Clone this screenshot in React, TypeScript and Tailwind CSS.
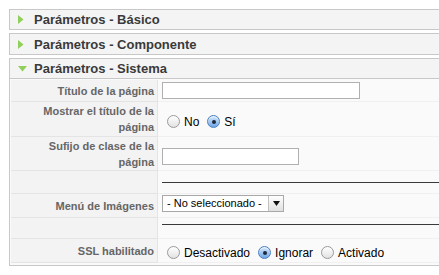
import React from "react"

const sans = "font-['Liberation_Sans','Helvetica','Arial',sans-serif]"

function Arrow({ open }: { open?: boolean }) {
  return open ? (
    <svg width="9" height="6" viewBox="0 0 9 6" className="shrink-0">
      <polygon points="0,0 9,0 4.5,5.5" fill="#8fcf5a" />
    </svg>
  ) : (
    <svg width="6" height="9" viewBox="0 0 6 9" className="shrink-0">
      <polygon points="0,0 5.5,4.5 0,9" fill="#8fcf5a" />
    </svg>
  )
}

function PanelHeader({ title, open, h }: { title: string; open?: boolean; h: string }) {
  return (
    <div className={`flex items-center bg-[#f4f4f4] ${h} pl-[8px]`}>
      <div className="w-[16px] flex items-center">
        <Arrow open={open} />
      </div>
      <span className="text-[13px] font-bold text-[#3a3a3a] leading-none">{title}</span>
    </div>
  )
}

function Radio({ checked }: { checked?: boolean }) {
  return checked ? (
    <span className="w-[13px] h-[13px] rounded-full border border-[#4a7fc0] bg-gradient-to-b from-[#d6e8fb] to-[#6fa6e6] flex items-center justify-center shrink-0 shadow-[inset_0_1px_1px_rgba(255,255,255,0.7)]">
      <span className="w-[4px] h-[4px] rounded-full bg-[#1b2a3a]" />
    </span>
  ) : (
    <span className="w-[13px] h-[13px] rounded-full border border-[#9a9a9a] bg-gradient-to-b from-[#ffffff] to-[#e2e2e2] shrink-0" />
  )
}

function Row({ label, h, children }: { label?: React.ReactNode; h: string; children?: React.ReactNode }) {
  return (
    <div className={`flex ${h}`}>
      <div className="w-[147px] shrink-0 bg-[#f3f3f3] border-b border-r border-[#e4e4e4] flex items-center justify-end pr-[3px] text-right text-[11px] font-bold text-[#666] leading-[16px]">
        {label}
      </div>
      <div className="flex-1 border-b border-[#f0f0f0] flex items-center pl-[4px]">{children}</div>
    </div>
  )
}

function RadioOpt({ label, checked }: { label: string; checked?: boolean }) {
  return (
    <label className="flex items-center gap-[4px] mr-[8px]">
      <Radio checked={checked} />
      <span className="text-[12px] text-black">{label}</span>
    </label>
  )
}

export default function App() {
  return (
    <div className={`w-[439px] h-[275px] overflow-hidden bg-white pl-[9px] pt-[9px] ${sans}`}>
      <div className="w-[460px] flex flex-col gap-[3px]">
        <div className="border border-[#c8c8c8]">
          <PanelHeader title="Parámetros - Básico" h="h-[19px]" />
        </div>
        <div className="border border-[#c8c8c8]">
          <PanelHeader title="Parámetros - Componente" h="h-[20px]" />
        </div>
        <div className="border border-[#c8c8c8]">
          <div className="border-b border-[#c8c8c8]">
            <PanelHeader title="Parámetros - Sistema" open h="h-[19px]" />
          </div>
          <div className="bg-[#fafafa] pl-[1px] pt-[1px] pb-[2px]">
            <Row label="Título de la página" h="h-[22px]">
              <input
                type="text"
                className="w-[198px] h-[17px] border border-[#b0b0b0] bg-white outline-none"
              />
            </Row>
            <Row
              h="h-[35px]"
              label={
                <span>
                  Mostrar el título de la
                  <br />
                  página
                </span>
              }
            >
              <div className="flex items-center pl-[5px] pt-[5px]">
                <RadioOpt label="No" />
                <RadioOpt label="Sí" checked />
              </div>
            </Row>
            <Row
              h="h-[34px]"
              label={
                <span>
                  Sufijo de clase de la
                  <br />
                  página
                </span>
              }
            >
              <input
                type="text"
                className="w-[137px] h-[17px] border border-[#b0b0b0] bg-white outline-none mt-[5px]"
              />
            </Row>
            <Row h="h-[23px]">
              <div className="w-full h-[1px] bg-[#3a3a3a] mt-[1px]" />
            </Row>
            <Row label="Menú de Imágenes" h="h-[24px]">
              <div className="w-[122px] h-[17px] border border-[#a8a8a8] bg-white flex items-center -mt-[4px]">
                <span className="flex-1 pl-[4px] text-[11px] text-black leading-none whitespace-nowrap">
                  - No seleccionado -
                </span>
                <span className="w-[15px] h-[15px] border-l border-[#c0c0c0] bg-gradient-to-b from-white to-[#e0e0e0] flex items-center justify-center">
                  <svg width="7" height="5" viewBox="0 0 7 5">
                    <polygon points="0,0 7,0 3.5,5" fill="#111" />
                  </svg>
                </span>
              </div>
            </Row>
            <Row h="h-[21px]">
              <div className="w-full h-[1px] bg-[#3a3a3a] -mt-[8px]" />
            </Row>
            <Row label="SSL habilitado" h="h-[24px]">
              <div className="flex items-center pl-[5px] pt-[4px]">
                <RadioOpt label="Desactivado" />
                <RadioOpt label="Ignorar" checked />
                <RadioOpt label="Activado" />
              </div>
            </Row>
          </div>
        </div>
      </div>
    </div>
  )
}
